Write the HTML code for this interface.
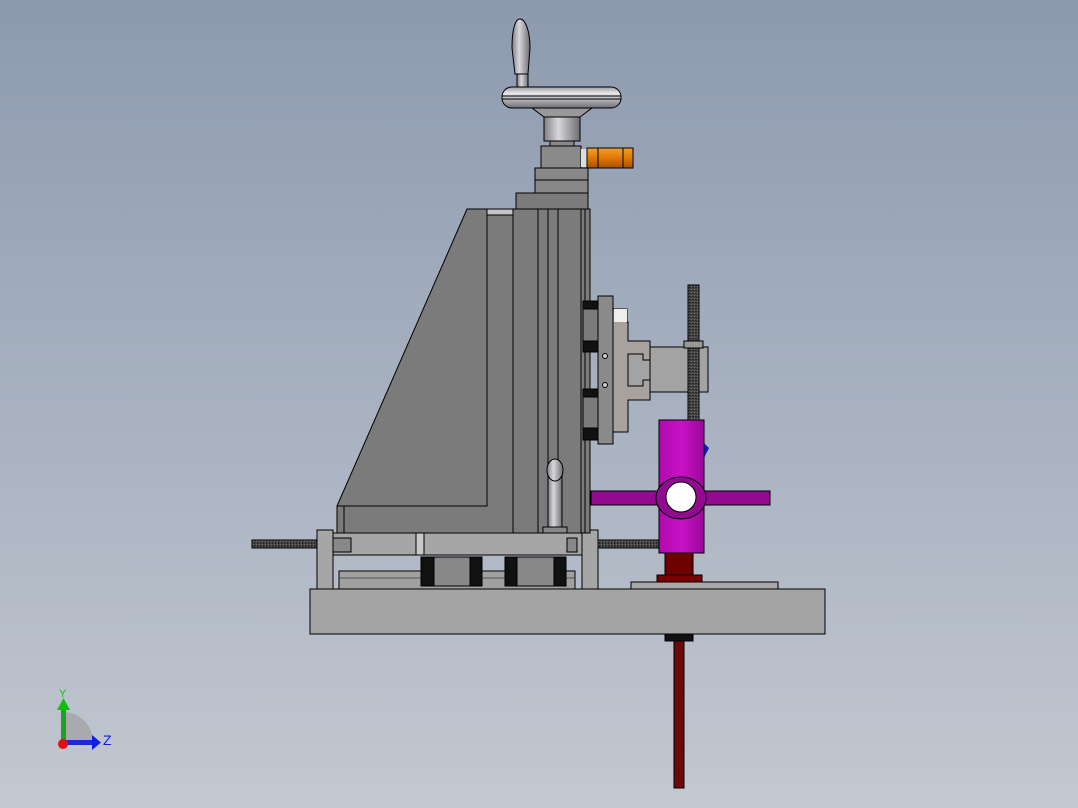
<!DOCTYPE html>
<html><head><meta charset="utf-8"><style>
html,body{margin:0;padding:0;width:1078px;height:808px;overflow:hidden}
body{background:linear-gradient(#8d9aae 0%,#a7b1c0 50%,#c3c8d1 100%)}
svg{position:absolute;left:0;top:0}
</style></head><body>
<svg width="1078" height="808" viewBox="0 0 1078 808" stroke="#000" stroke-width="1">
<defs>
<linearGradient id="mg" x1="0" x2="1"><stop offset="0" stop-color="#b00aae"/><stop offset=".5" stop-color="#c812c6"/><stop offset="1" stop-color="#9a0898"/></linearGradient>
<linearGradient id="og" x1="0" x2="0" y1="0" y2="1"><stop offset="0" stop-color="#f0a030"/><stop offset=".5" stop-color="#e07800"/><stop offset="1" stop-color="#a85000"/></linearGradient>
<linearGradient id="wg" x1="0" x2="0" y1="0" y2="1"><stop offset="0" stop-color="#9a9a9e"/><stop offset=".3" stop-color="#e8e8ec"/><stop offset="1" stop-color="#707074"/></linearGradient>
<linearGradient id="kg" x1="0" x2="1"><stop offset="0" stop-color="#808084"/><stop offset=".4" stop-color="#d8d8dc"/><stop offset="1" stop-color="#6e6e72"/></linearGradient>
<pattern id="th" width="3" height="3" patternUnits="userSpaceOnUse"><rect width="3" height="3" fill="#999"/><rect width="1.5" height="3" fill="#444" stroke="none"/></pattern>
<pattern id="tv" width="3" height="3" patternUnits="userSpaceOnUse"><rect width="3" height="3" fill="#999"/><rect width="3" height="1.5" fill="#444" stroke="none"/></pattern>
</defs>
<rect x="674" y="640" width="10" height="148" fill="#6a0a0a"/>
<rect x="665" y="634" width="28" height="7" fill="#111"/>
<rect x="310" y="589" width="515" height="45" fill="#a4a4a4"/>
<rect x="631" y="582" width="147" height="7" fill="#a8a8a8"/>
<rect x="339" y="571" width="236" height="18" fill="#a0a0a0"/>
<line x1="339" y1="578" x2="575" y2="578" stroke="#555"/>
<rect x="421" y="557" width="61" height="29" fill="#888"/>
<rect x="421" y="557" width="13" height="29" fill="#111"/><rect x="470" y="557" width="12" height="29" fill="#111"/>
<rect x="505" y="557" width="61" height="29" fill="#888"/>
<rect x="505" y="557" width="12" height="29" fill="#111"/><rect x="554" y="557" width="12" height="29" fill="#111"/>
<rect x="252" y="540" width="66" height="8" fill="url(#th)"/>
<rect x="598" y="540" width="64" height="8" fill="url(#th)"/>
<rect x="333" y="533" width="250" height="22" fill="#a6a6a6"/>
<rect x="416" y="533" width="8" height="22" fill="#c8c8c8"/>
<rect x="317" y="530" width="16" height="59" fill="#a6a6a6"/>
<rect x="582" y="530" width="16" height="59" fill="#a6a6a6"/>
<rect x="333" y="538" width="18" height="14" fill="#888"/><rect x="567" y="538" width="10" height="14" fill="#888"/>
<polygon points="467,209 513,209 513,533 337,533 337,506" fill="#7b7b7b"/>
<polyline points="487,209 487,506 337,506" fill="none"/>
<rect x="487" y="209" width="26" height="6" fill="#c4c4c4"/>
<line x1="344" y1="506" x2="344" y2="533"/>
<rect x="513" y="209" width="77" height="324" fill="#7b7b7b"/>
<line x1="538" y1="209" x2="538" y2="533"/><line x1="548" y1="209" x2="548" y2="533"/><line x1="558" y1="209" x2="558" y2="533"/>
<line x1="581" y1="209" x2="581" y2="533"/><line x1="585" y1="209" x2="585" y2="533"/>
<rect x="516" y="193" width="72" height="16" fill="#7b7b7b"/>
<rect x="548" y="470" width="14" height="58" fill="url(#kg)"/>
<ellipse cx="555" cy="470" rx="8" ry="11" fill="url(#kg)"/>
<rect x="543" y="527" width="24" height="6" fill="#888"/>
<rect x="583" y="301" width="15" height="51" fill="#7b7b7b"/><rect x="583" y="301" width="15" height="8" fill="#111"/><rect x="583" y="341" width="15" height="11" fill="#111"/>
<rect x="583" y="389" width="15" height="51" fill="#7b7b7b"/><rect x="583" y="389" width="15" height="8" fill="#111"/><rect x="583" y="428" width="15" height="12" fill="#111"/>
<rect x="598" y="296" width="15" height="148" fill="#8a8a8a"/>
<circle cx="605" cy="356" r="2.5" fill="#ccc"/><circle cx="605" cy="385" r="2.5" fill="#ccc"/>
<polygon points="613,309 627,309 627,322 628,322 628,341 650,341 650,400 628,400 628,432 613,432" fill="#a8a29e"/>
<rect x="614" y="309" width="13" height="13" fill="#eee" stroke="none"/>
<polygon points="628,354 643,354 643,360 650,360 650,380 643,380 643,386 628,386" fill="#a3a3a3"/>
<rect x="650" y="347" width="58" height="45" fill="#a3a3a3"/>
<rect x="688" y="285" width="11" height="136" fill="url(#tv)"/>
<rect x="684" y="341" width="19" height="7" fill="#999"/>
<polygon points="704,443 709,448 704,458" fill="#1018d0" stroke="none"/>
<rect x="591" y="491" width="179" height="14" fill="#920a90"/>
<rect x="659" y="420" width="45" height="133" fill="url(#mg)"/>
<ellipse cx="681" cy="498" rx="25" ry="21" fill="#920a90"/>
<circle cx="681" cy="497" r="15" fill="#fff"/>
<rect x="665" y="553" width="28" height="22" fill="#6e0000"/>
<rect x="657" y="575" width="45" height="7" fill="#7a0000"/>
<rect x="535" y="180" width="53" height="13" fill="#888"/>
<rect x="535" y="168" width="53" height="12" fill="#888"/>
<rect x="541" y="146" width="40" height="22" fill="#8a8a8a"/>
<rect x="581" y="149" width="7" height="18" fill="#ddd" stroke="none"/>
<rect x="587" y="148" width="46" height="20" fill="url(#og)"/>
<line x1="598" y1="148" x2="598" y2="168"/><line x1="623" y1="148" x2="623" y2="168"/>
<rect x="544" y="117" width="36" height="24" fill="url(#kg)"/>
<rect x="550" y="141" width="24" height="5" fill="#888"/>
<polygon points="532,108 592,108 580,117 544,117" fill="#999"/>
<rect x="502" y="87" width="119" height="21" rx="10" fill="url(#wg)"/>
<line x1="502" y1="96" x2="621" y2="96"/><line x1="502" y1="99" x2="621" y2="99"/>
<rect x="517" y="74" width="11" height="13" fill="url(#kg)"/>
<path d="M512,48 C512,30 515,19 520,19 C525,19 530,30 530,48 L528,74 L515,74 Z" fill="url(#kg)"/>
<g stroke="none">
<path d="M63,742 L63,712 A30,30 0 0 1 93,742 Z" fill="#999" opacity=".6"/>
<rect x="61" y="708" width="5" height="34" fill="#20a020"/>
<polygon points="57,710 63.5,698 70,710" fill="#10c010"/>
<rect x="63" y="740" width="30" height="5" fill="#1c2ad0"/>
<polygon points="92,735 101,742.5 92,750" fill="#1020e0"/>
<circle cx="63" cy="744" r="5" fill="#e01010"/>
</g>
<text x="59" y="697" font-family="Liberation Sans, sans-serif" font-size="11" fill="#10c010" stroke="none">Y</text>
<text x="103" y="745" font-family="Liberation Sans, sans-serif" font-size="14" fill="#1020e0" stroke="none">Z</text>
</svg>
</body></html>
